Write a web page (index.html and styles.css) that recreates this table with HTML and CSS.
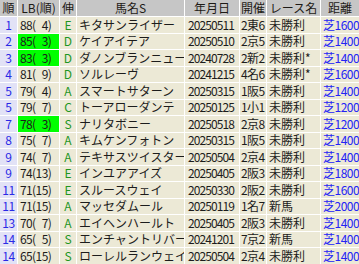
FILE: index.html
```html
<!DOCTYPE html>
<html lang="ja">
<head>
<meta charset="utf-8">
<link rel="stylesheet" href="styles.css">
</head>
<body>
<div class="grid">
  <div class="h">順</div><div class="h">LB(順)</div><div class="h">伸</div><div class="h">馬名S</div><div class="h">年月日</div><div class="h">開催</div><div class="h">レース名</div><div class="h">距離</div>

  <div class="c rank">1</div><div class="c lb">88(&#8199;4)</div><div class="c nobi">E</div><div class="c name">キタサンライザー</div><div class="c date">20250511</div><div class="c kai">2東6</div><div class="c race">未勝利</div><div class="c dist">芝1600</div>
  <div class="c rank">2</div><div class="c lb hi">85(&#8199;3)</div><div class="c nobi">D</div><div class="c name">ケイアイテア</div><div class="c date">20250510</div><div class="c kai">2京5</div><div class="c race">未勝利</div><div class="c dist">芝1400</div>
  <div class="c rank">3</div><div class="c lb hi">83(&#8199;3)</div><div class="c nobi">D</div><div class="c name">ダノンブランニュー</div><div class="c date">20240728</div><div class="c kai">2新2</div><div class="c race">未勝利*</div><div class="c dist">芝1400</div>
  <div class="c rank">4</div><div class="c lb">81(&#8199;9)</div><div class="c nobi">D</div><div class="c name">ソルレーヴ</div><div class="c date">20241215</div><div class="c kai">4名6</div><div class="c race">未勝利*</div><div class="c dist">芝1600</div>
  <div class="c rank">5</div><div class="c lb">79(&#8199;4)</div><div class="c nobi">A</div><div class="c name">スマートサターン</div><div class="c date">20250315</div><div class="c kai">1阪5</div><div class="c race">未勝利</div><div class="c dist">芝1400</div>
  <div class="c rank">5</div><div class="c lb">79(&#8199;7)</div><div class="c nobi">C</div><div class="c name">トーアローダンテ</div><div class="c date">20250125</div><div class="c kai">1小1</div><div class="c race">未勝利</div><div class="c dist">芝1200</div>
  <div class="c rank">7</div><div class="c lb hi">78(&#8199;3)</div><div class="c nobi">S</div><div class="c name">ナリタボニー</div><div class="c date">20250518</div><div class="c kai">2京8</div><div class="c race">未勝利</div><div class="c dist">芝1200</div>
  <div class="c rank">8</div><div class="c lb">75(&#8199;7)</div><div class="c nobi">A</div><div class="c name">キムケンフォトン</div><div class="c date">20250315</div><div class="c kai">1阪5</div><div class="c race">未勝利</div><div class="c dist">芝1400</div>
  <div class="c rank">9</div><div class="c lb">74(&#8199;7)</div><div class="c nobi">A</div><div class="c name">テキサスツイスター</div><div class="c date">20250504</div><div class="c kai">2京4</div><div class="c race">未勝利</div><div class="c dist">芝1400</div>
  <div class="c rank">9</div><div class="c lb">74(13)</div><div class="c nobi">E</div><div class="c name">インユアアイズ</div><div class="c date">20250405</div><div class="c kai">2阪3</div><div class="c race">未勝利</div><div class="c dist">芝1800</div>
  <div class="c rank">11</div><div class="c lb">71(15)</div><div class="c nobi">E</div><div class="c name">スルースウェイ</div><div class="c date">20250330</div><div class="c kai">2阪2</div><div class="c race">未勝利</div><div class="c dist">芝1600</div>
  <div class="c rank">11</div><div class="c lb">71(15)</div><div class="c nobi">A</div><div class="c name">マッセダムール</div><div class="c date">20250119</div><div class="c kai">1名7</div><div class="c race">新馬</div><div class="c dist">芝2000</div>
  <div class="c rank">13</div><div class="c lb">70(&#8199;7)</div><div class="c nobi">A</div><div class="c name">エイヘンハールト</div><div class="c date">20250405</div><div class="c kai">2阪3</div><div class="c race">未勝利</div><div class="c dist">芝1400</div>
  <div class="c rank">14</div><div class="c lb">65(&#8199;5)</div><div class="c nobi">S</div><div class="c name">エンチャントリバー</div><div class="c date">20241201</div><div class="c kai">7京2</div><div class="c race">新馬</div><div class="c dist">芝1400</div>
  <div class="c rank">14</div><div class="c lb">65(15)</div><div class="c nobi">S</div><div class="c name">ローレルランウェイ</div><div class="c date">20250504</div><div class="c kai">2京4</div><div class="c race">未勝利</div><div class="c dist">芝1400</div>
</div>
</body>
</html>
```

FILE: styles.css
```css
html, body {
  margin: 0;
  padding: 0;
  background: #ffffff;
}

.grid {
  display: grid;
  grid-template-columns: 17px 41px 16px 107px 54px 26px 53px 38px;
  grid-template-rows: 16px;
  grid-auto-rows: 15.5px;
  column-gap: 1px;
  row-gap: 1px;
  width: 359px;
  font-family: "Noto Sans CJK JP", "Noto Sans", sans-serif;
  font-size: 12px;
  color: #1c1c1c;
}

.h, .c {
  overflow: hidden;
  white-space: nowrap;
  display: flex;
  align-items: center;
  line-height: 1;
}

.h {
  background: #c6c6c6;
  justify-content: center;
  color: #1e1a16;
}

.c {
  background: #ece9d6;
  padding-left: 2px;
}

.rank {
  background: #e2e2f6;
  color: #2a2ae6;
  justify-content: center;
  padding-left: 0;
  letter-spacing: -0.4px;
}

.lb {
  letter-spacing: -0.6px;
  padding-left: 2px;
}

.lb.hi {
  background: #00ff00;
}

.nobi {
  color: #1f961f;
  justify-content: center;
  padding-left: 0;
}

.date {
  letter-spacing: -0.9px;
  padding-left: 3px;
}

.kai {
  letter-spacing: -0.6px;
  padding-left: 1px;
}

.race {
  padding-left: 2px;
}

.dist {
  color: #2323f5;
  padding-left: 2px;
  letter-spacing: -0.5px;
}
```
